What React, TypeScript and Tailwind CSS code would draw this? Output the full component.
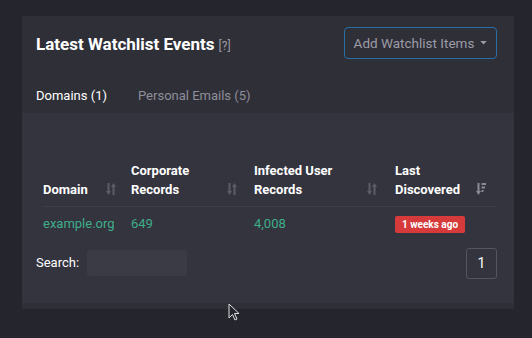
import React from 'react';

const SortIcon = ({ active = false }: { active?: boolean }) => (
  <svg width="10" height="14" viewBox="0 0 10 14" className="shrink-0">
    {active ? (
      <g fill="#8a8a94">
        <rect x="1.5" y="1" width="2" height="9" />
        <path d="M0 9 L5 9 L2.5 13 Z" />
        <rect x="5.5" y="1" width="4.5" height="2" />
        <rect x="5.5" y="4.5" width="3.5" height="2" />
        <rect x="5.5" y="8" width="2" height="2" />
      </g>
    ) : (
      <g fill="#5c5c66">
        <rect x="1.5" y="1" width="2" height="9" />
        <path d="M0 9 L5 9 L2.5 13 Z" />
        <rect x="6.5" y="4" width="2" height="9" />
        <path d="M5 5 L10 5 L7.5 1 Z" />
      </g>
    )}
  </svg>
);

const App = () => {
  const headers = [
    { label: ['Domain'], w: 'w-[88px] pr-[15px]', active: false },
    { label: ['Corporate', 'Records'], w: 'w-[123px] pr-[17px]', active: false },
    { label: ['Infected User', 'Records'], w: 'w-[141px] pr-[18px]', active: false },
    { label: ['Last', 'Discovered'], w: 'flex-1 pr-[11px]', active: true },
  ];

  return (
    <div
      className="relative w-[532px] h-[338px] bg-[#25252d] pt-[16px] px-[22px] overflow-hidden"
      style={{ fontFamily: 'Roboto, "Liberation Sans", sans-serif' }}
    >
      <div className="w-[492px] h-[293px] bg-[#2f2f38] flex flex-col">
        {/* Header */}
        <div className="flex items-center justify-between pl-[14px] pr-[17px] pt-[11px] h-[32px] box-content">
          <div className="flex items-baseline gap-[4px] pt-[3px]">
            <h2 className="text-[17px] font-bold text-white">Latest Watchlist Events</h2>
            <span className="text-[12px] text-[#9a9aa4]">[?]</span>
          </div>
          <button className="h-[32px] w-[153px] border border-[#2b6ca3] rounded-[4px] flex items-center justify-center gap-[6px] text-[13.5px] text-[#9c9ca6]">
            Add Watchlist Items
            <svg width="7" height="4" viewBox="0 0 8 5">
              <path d="M0 0 L8 0 L4 4.5 Z" fill="#9c9ca6" />
            </svg>
          </button>
        </div>

        {/* Tabs */}
        <div className="flex items-end h-[54px] pl-[14px] pb-[8px] text-[13px]">
          <span className="text-white w-[102px]">Domains (1)</span>
          <span className="text-[#8e8e98]">Personal Emails (5)</span>
        </div>

        {/* Tab content */}
        <div className="bg-[#34343e] h-[190px] pl-[14px] pr-[17px] pt-[46px]">
          <div className="pl-[7px]">
            <div className="flex items-end h-[48px] pb-[7px] border-b border-[#3f3f4a]">
              {headers.map((h, i) => (
                <div key={i} className={`${h.w} flex items-end justify-between text-[13px] font-bold text-white leading-[19px]`}>
                  <div>
                    {h.label.map((l, j) => (
                      <div key={j}>{l}</div>
                    ))}
                  </div>
                  <div className="pb-[3px]">
                    <SortIcon active={h.active} />
                  </div>
                </div>
              ))}
            </div>
            <div className="flex items-center h-[34px] text-[13px] text-[#3eae8a]">
              <div className="w-[88px]">example.org</div>
              <div className="w-[123px]">649</div>
              <div className="w-[141px]">4,008</div>
              <div className="flex-1">
                <span className="inline-block bg-[#d63a3a] text-white font-bold text-[10px] leading-[17px] px-[7px] rounded-[2px]">
                  1 weeks ago
                </span>
              </div>
            </div>
          </div>
          <div className="flex items-center justify-between mt-[7px]">
            <div className="flex items-center gap-[8px] pb-[2px]">
              <span className="text-[13px] text-white">Search:</span>
              <div className="w-[100px] h-[26px] bg-[#3b3b45] rounded-[3px]" />
            </div>
            <div className="w-[31px] h-[31px] border border-[#555560] rounded-[3px] flex items-center justify-center text-[14px] text-white">
              1
            </div>
          </div>
        </div>
      </div>

      {/* mouse cursor */}
      <svg className="absolute left-[228px] top-[303px]" width="12" height="18" viewBox="0 0 12 18">
        <path d="M1 1 L1 15 L4.5 11.5 L7 17 L9 16 L6.5 10.5 L11 10.5 Z" fill="#25252d" stroke="#e0e0e0" strokeWidth="1" />
      </svg>
    </div>
  );
};

export default App;
